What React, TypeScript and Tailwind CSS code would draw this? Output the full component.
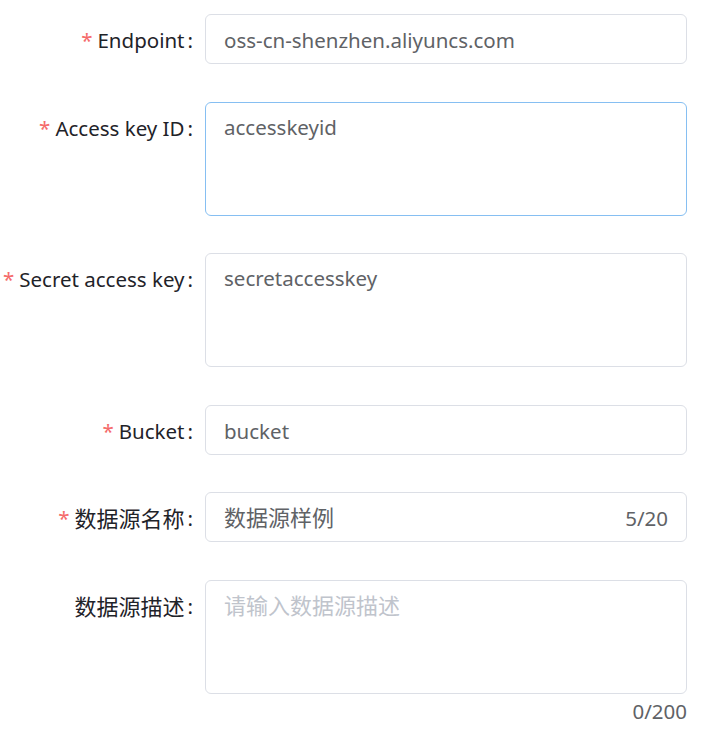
import React from 'react';

const font = { fontFamily: '"Noto Sans", "Noto Sans CJK SC", sans-serif' };

const isCjk = (s: string) => /[\u4e00-\u9fff]/.test(s);

function T({ s }: { s: string }) {
  return <span className={isCjk(s) ? 'text-[22px]' : ''}>{s}</span>;
}

function Label({ text, required }: { text: string; required?: boolean }) {
  return (
    <div className="w-[205px] shrink-0 pr-[12px] pt-[1px] flex justify-end items-center h-[50px] leading-[28px] text-[20.5px] text-[#1f2329]">
      {required && <span className="text-[#f56c6c] mr-[5px]">*</span>}
      <T s={text} />
      <span className="ml-[3px]">:</span>
    </div>
  );
}

function Input({ value, suffix }: { value: string; suffix?: string }) {
  return (
    <div className="w-[482px] h-[50px] border border-[#dcdfe6] rounded-[6px] flex items-center px-[18px] pt-[1px] leading-[28px] text-[20.5px] text-[#606266]">
      <span className="flex-1">
        <T s={value} />
      </span>
      {suffix && <span className="text-[#606266]">{suffix}</span>}
    </div>
  );
}

function Area({ value, placeholder, focused }: { value?: string; placeholder?: string; focused?: boolean }) {
  return (
    <div
      className={
        'w-[482px] h-[114px] rounded-[6px] px-[18px] pt-[8px] text-[20.5px] leading-[32px] border ' +
        (focused ? 'border-[#86bff2]' : 'border-[#dcdfe6]')
      }
    >
      {value ? (
        <span className="text-[#606266]">{value}</span>
      ) : (
        <span className="text-[#c0c4cc]">
          <T s={placeholder ?? ''} />
        </span>
      )}
    </div>
  );
}

export default function App() {
  return (
    <div className="bg-white w-[703px] h-[741px] pt-[14px]" style={font}>
      <div className="flex">
        <Label text="Endpoint" required />
        <Input value="oss-cn-shenzhen.aliyuncs.com" />
      </div>

      <div className="flex mt-[38px]">
        <Label text="Access key ID" required />
        <Area value="accesskeyid" focused />
      </div>

      <div className="flex mt-[37px]">
        <Label text="Secret access key" required />
        <Area value="secretaccesskey" />
      </div>

      <div className="flex mt-[38px]">
        <Label text="Bucket" required />
        <Input value="bucket" />
      </div>

      <div className="flex mt-[37px]">
        <Label text="数据源名称" required />
        <Input value="数据源样例" suffix="5/20" />
      </div>

      <div className="flex mt-[38px]">
        <Label text="数据源描述" />
        <Area placeholder="请输入数据源描述" />
      </div>

      <div className="w-[687px] flex justify-end text-[20.5px] leading-[30px] text-[#606266] mt-[2px]">0/200</div>
    </div>
  );
}
